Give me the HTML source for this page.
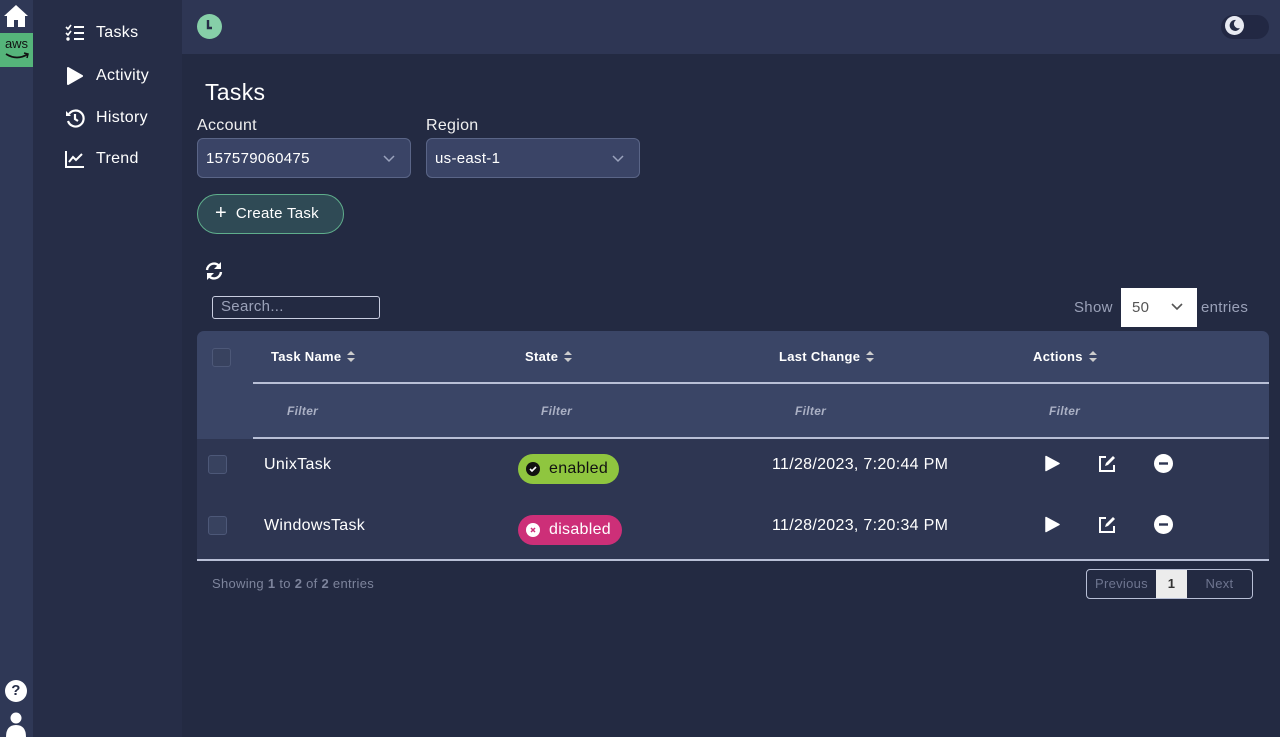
<!DOCTYPE html>
<html><head><meta charset="utf-8"><style>
*{box-sizing:border-box;margin:0;padding:0}
body{width:1280px;height:737px;overflow:hidden;background:#232a42;font-family:"Liberation Sans",sans-serif;color:#fff;position:relative;letter-spacing:0.3px}
.abs{position:absolute}
.strip{left:0;top:0;width:33px;height:737px;background:#2f3856}
.side{left:33px;top:0;width:149px;height:737px;background:#262d47}
.hdr{left:182px;top:0;width:1098px;height:54px;background:#2e3654}
.nav{left:65px;font-size:16px;display:flex;align-items:center;gap:11px}
.lbl{font-size:16px;color:#f0f0f0}
.sel{height:40px;border:1px solid #5a6587;background:#3a4466;border-radius:6px;font-size:15px;padding:11px 8px;color:#fff}
.chev{position:absolute;right:14px;top:12px}
.th{font-size:13px;font-weight:900;top:349px;display:flex;align-items:center;gap:6px}
.fl{font-size:12px;font-style:italic;font-weight:bold;color:#aab0c4;top:404px}
.cb{width:19px;height:19px;border:1px solid #4d5878;border-radius:3px;background:#38425f}
.cell{font-size:16px}
.badge{height:30px;border-radius:15px;font-size:16px;display:flex;align-items:center;padding:0 11px 0 8px;gap:9px}
</style></head><body>
<div class="abs strip"></div>
<div class="abs side"></div>
<div class="abs hdr"></div>
<svg class="abs" style="left:3px;top:4px" width="26" height="24" viewBox="0 0 26 24"><path d="M13 1L1 12h3v11h7v-7h4v7h7V12h3z" fill="#fff"/></svg>
<div class="abs" style="left:0;top:33px;width:33px;height:34px;background:#55b47a;font-size:13px;color:#111;text-align:center;line-height:22px;letter-spacing:0">aws<svg style="position:absolute;left:4px;top:19px" width="26" height="8"><path d="M2 2Q13 9 24 2" stroke="#111" stroke-width="1.8" fill="none"/><path d="M20 1l4 1-1 4" stroke="#111" stroke-width="1.5" fill="none"/></svg></div>
<div class="abs" style="left:5px;top:680px;width:22px;height:22px;border-radius:50%;background:#fff;color:#262d47;font-weight:bold;font-size:15px;text-align:center;line-height:22px">?</div>
<svg class="abs" style="left:5px;top:712px" width="22" height="25"><circle cx="11" cy="6" r="5.5" fill="#fff"/><path d="M1 25Q1 13 11 13Q21 13 21 25z" fill="#fff"/></svg>
<div class="abs nav" style="top:24px"><svg width="20" height="18"><path d="M1 3l2 2 3-4M1 9l2 2 3-4" stroke="#fff" stroke-width="1.6" fill="none"/><circle cx="3" cy="15" r="1.7" fill="#fff"/><path d="M9 3h10M9 9h10M9 15h10" stroke="#fff" stroke-width="2"/></svg><span>Tasks</span></div>
<div class="abs nav" style="top:66px"><svg width="18" height="20"><path d="M3 2L17 10 3 18z" fill="#fff" stroke="#fff" stroke-linejoin="round" stroke-width="2"/></svg><span style="margin-left:2px">Activity</span></div>
<div class="abs nav" style="top:108px"><svg width="20" height="20" viewBox="0 0 20 20"><path d="M4 6A8 8 0 1 1 3 13" stroke="#fff" stroke-width="2.2" fill="none"/><path d="M1 3v5h5" fill="#fff"/><path d="M10 6v5l3 2" stroke="#fff" stroke-width="2.2" fill="none"/></svg><span>History</span></div>
<div class="abs nav" style="top:150px"><svg width="20" height="18"><path d="M1 1v16h18" stroke="#fff" stroke-width="2" fill="none"/><path d="M4 12l4-5 3 3 6-6" stroke="#fff" stroke-width="2" fill="none"/></svg><span>Trend</span></div>
<svg class="abs" style="left:196px;top:13px" width="27" height="27"><circle cx="13.5" cy="13.5" r="12.5" fill="#86cfa8"/><path d="M12 7v8h4" stroke="#262d47" stroke-width="2.4" fill="none"/></svg>
<div class="abs" style="left:1221px;top:15px;width:48px;height:24px;border-radius:12px;background:#222843"></div>
<div class="abs" style="left:1225px;top:16px;width:19px;height:19px;border-radius:50%;background:#e8eaf2"></div>
<svg class="abs" style="left:1228px;top:19px" width="13" height="13"><path d="M8 1A5.5 5.5 0 1 0 12 9A4.5 4.5 0 0 1 8 1z" fill="#262d47"/></svg>
<div class="abs" style="left:205px;top:79px;font-size:23px">Tasks</div>
<div class="abs lbl" style="left:197px;top:117px">Account</div>
<div class="abs lbl" style="left:426px;top:117px">Region</div>
<div class="abs sel" style="left:197px;top:138px;width:214px">157579060475<svg class="chev" width="14" height="14"><path d="M2 5l5 5 5-5" stroke="#9aa3bd" stroke-width="1.5" fill="none"/></svg></div>
<div class="abs sel" style="left:426px;top:138px;width:214px">us-east-1<svg class="chev" width="14" height="14"><path d="M2 5l5 5 5-5" stroke="#9aa3bd" stroke-width="1.5" fill="none"/></svg></div>
<div class="abs" style="left:197px;top:194px;width:147px;height:40px;border:1.5px solid #5fae8c;border-radius:20px;background:#2f4a55;font-size:15px;line-height:37px;padding-left:17px"><span style="font-size:20px;vertical-align:-1px">+</span>&nbsp; Create Task</div>
<svg class="abs" style="left:204px;top:261px" width="20" height="20" viewBox="0 0 20 20"><path d="M3 9A7 7 0 0 1 16 6" stroke="#fff" stroke-width="2.4" fill="none"/><path d="M17 1v7h-7z" fill="#fff"/><path d="M17 11A7 7 0 0 1 4 14" stroke="#fff" stroke-width="2.4" fill="none"/><path d="M3 19v-7h7z" fill="#fff"/></svg>
<div class="abs" style="left:212px;top:296px;width:168px;height:23px;border:1.5px solid #c8cde0;border-radius:3px;font-size:15px;color:#9aa1b8;padding:1px 8px">Search...</div>
<div class="abs" style="left:1074px;top:299px;font-size:15px;color:#9aa1b8">Show</div>
<div class="abs" style="left:1121px;top:288px;width:76px;height:39px;background:#fff;color:#555;font-size:15px;padding:11px 11px">50<svg style="position:absolute;right:14px;top:14px" width="12" height="10"><path d="M1 2l5 5 5-5" stroke="#555" stroke-width="1.6" fill="none"/></svg></div>
<div class="abs" style="left:1201px;top:299px;font-size:15px;color:#9aa1b8">entries</div>
<div class="abs" style="left:197px;top:331px;width:1072px;height:108px;background:#3a4566;border-radius:7px 7px 0 0"></div>
<div class="abs" style="left:197px;top:439px;width:1072px;height:121px;background:#2e3652"></div>
<div class="abs" style="left:253px;top:382px;width:1016px;height:1.5px;background:#b8bfd6"></div>
<div class="abs" style="left:253px;top:437px;width:1016px;height:1.5px;background:#b8bfd6"></div>
<div class="abs" style="left:197px;top:559px;width:1072px;height:2px;background:#b8bfd6"></div>
<div class="abs cb" style="left:212px;top:348px"></div>
<div class="abs th" style="left:271px">Task Name <svg width="8" height="11"><path d="M4 0L8 4H0zM4 11L0 7h8z" fill="#ccc"/></svg></div>
<div class="abs th" style="left:525px">State <svg width="8" height="11"><path d="M4 0L8 4H0zM4 11L0 7h8z" fill="#ccc"/></svg></div>
<div class="abs th" style="left:779px">Last Change <svg width="8" height="11"><path d="M4 0L8 4H0zM4 11L0 7h8z" fill="#ccc"/></svg></div>
<div class="abs th" style="left:1033px">Actions <svg width="8" height="11"><path d="M4 0L8 4H0zM4 11L0 7h8z" fill="#ccc"/></svg></div>
<div class="abs fl" style="left:287px">Filter</div>
<div class="abs fl" style="left:541px">Filter</div>
<div class="abs fl" style="left:795px">Filter</div>
<div class="abs fl" style="left:1049px">Filter</div>
<div class="abs cb" style="left:208px;top:455px"></div>
<div class="abs cell" style="left:264px;top:456px">UnixTask</div>
<div class="abs badge" style="left:518px;top:454px;background:#8fc63f;color:#111"><svg width="14" height="14"><circle cx="7" cy="7" r="7" fill="#111"/><path d="M4 7l2 2 4-4" stroke="#fff" stroke-width="1.6" fill="none"/></svg>enabled</div>
<div class="abs cell" style="left:772px;top:456px">11/28/2023, 7:20:44 PM</div>
<div class="abs cb" style="left:208px;top:516px"></div>
<div class="abs cell" style="left:264px;top:517px">WindowsTask</div>
<div class="abs badge" style="left:518px;top:515px;background:#cd2f78;color:#fff"><svg width="14" height="14"><circle cx="7" cy="7" r="7" fill="#fff"/><path d="M5 5l4 4M9 5l-4 4" stroke="#cd2f78" stroke-width="1.5"/></svg>disabled</div>
<div class="abs cell" style="left:772px;top:517px">11/28/2023, 7:20:34 PM</div>
<svg class="abs" style="left:1044px;top:455px" width="16" height="17"><path d="M2 1.5L15 8.5 2 15.5z" fill="#fff" stroke="#fff" stroke-linejoin="round" stroke-width="1.5"/></svg>
<svg class="abs" style="left:1097px;top:454px" width="20" height="20" viewBox="0 0 20 20"><path d="M9 3H3v14h14v-6" stroke="#fff" stroke-width="2" fill="none"/><path d="M8 12l1-3 7-7 2 2-7 7z" fill="#fff"/></svg>
<svg class="abs" style="left:1154px;top:454px" width="19" height="19"><circle cx="9.5" cy="9.5" r="9.5" fill="#fff"/><rect x="5" y="8.3" width="9" height="2.4" fill="#2e3652"/></svg>
<svg class="abs" style="left:1044px;top:516px" width="16" height="17"><path d="M2 1.5L15 8.5 2 15.5z" fill="#fff" stroke="#fff" stroke-linejoin="round" stroke-width="1.5"/></svg>
<svg class="abs" style="left:1097px;top:515px" width="20" height="20" viewBox="0 0 20 20"><path d="M9 3H3v14h14v-6" stroke="#fff" stroke-width="2" fill="none"/><path d="M8 12l1-3 7-7 2 2-7 7z" fill="#fff"/></svg>
<svg class="abs" style="left:1154px;top:515px" width="19" height="19"><circle cx="9.5" cy="9.5" r="9.5" fill="#fff"/><rect x="5" y="8.3" width="9" height="2.4" fill="#2e3652"/></svg>
<div class="abs" style="left:212px;top:576px;font-size:13px;color:#7d849c">Showing <b>1</b> to <b>2</b> of <b>2</b> entries</div>
<div class="abs" style="left:1086px;top:569px;width:167px;height:30px;border:1px solid #b8bfd6;border-radius:4px;overflow:hidden;display:flex;font-size:13px;color:#6e7590">
<div style="width:69px;text-align:center;line-height:28px">Previous</div>
<div style="width:31px;background:#ececec;color:#333;text-align:center;line-height:28px;font-weight:bold">1</div>
<div style="flex:1;text-align:center;line-height:28px">Next</div></div>
</body></html>
